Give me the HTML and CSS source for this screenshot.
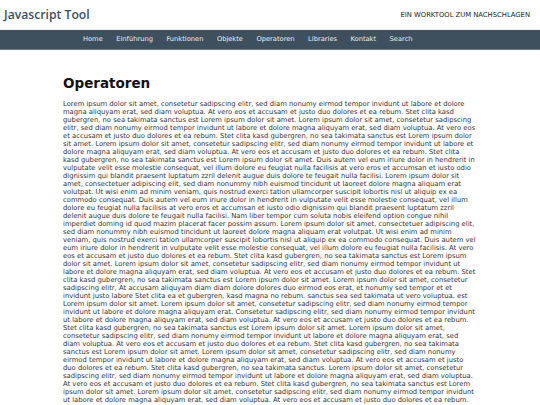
FILE: index.html
```html
<!DOCTYPE html>
<html lang="de">
<head>
<meta charset="utf-8">
<title>Javascript Tool – Operatoren</title>
<link rel="stylesheet" href="styles.css">
</head>
<body>
<header class="site-header">
  <div class="logo">Javascript Tool</div>
  <div class="tagline">EIN WORKTOOL ZUM NACHSCHLAGEN</div>
</header>
<nav class="main-nav">
  <div class="wrap">
    <ul class="menu">
      <li><a href="#">Home</a></li>
      <li><a href="#">Einführung</a></li>
      <li><a href="#">Funktionen</a></li>
      <li><a href="#">Objekte</a></li>
      <li><a href="#">Operatoren</a></li>
      <li><a href="#">Libraries</a></li>
      <li><a href="#">Kontakt</a></li>
      <li><a href="#">Search</a></li>
    </ul>
  </div>
</nav>
<main class="wrap content">
  <h1 class="title">Operatoren</h1>
  <p class="text">Lorem ipsum dolor sit amet, consetetur sadipscing elitr, sed diam nonumy eirmod tempor invidunt ut labore et dolore magna aliquyam erat, sed diam voluptua. At vero eos et accusam et justo duo dolores et ea rebum. Stet clita kasd gubergren, no sea takimata sanctus est Lorem ipsum dolor sit amet. Lorem ipsum dolor sit amet, consetetur sadipscing elitr, sed diam nonumy eirmod tempor invidunt ut labore et dolore magna aliquyam erat, sed diam voluptua. At vero eos et accusam et justo duo dolores et ea rebum. Stet clita kasd gubergren, no sea takimata sanctus est Lorem ipsum dolor sit amet. Lorem ipsum dolor sit amet, consetetur sadipscing elitr, sed diam nonumy eirmod tempor invidunt ut labore et dolore magna aliquyam erat, sed diam voluptua. At vero eos et accusam et justo duo dolores et ea rebum. Stet clita kasd gubergren, no sea takimata sanctus est Lorem ipsum dolor sit amet. Duis autem vel eum iriure dolor in hendrerit in vulputate velit esse molestie consequat, vel illum dolore eu feugiat nulla facilisis at vero eros et accumsan et iusto odio dignissim qui blandit praesent luptatum zzril delenit augue duis dolore te feugait nulla facilisi. Lorem ipsum dolor sit amet, consectetuer adipiscing elit, sed diam nonummy nibh euismod tincidunt ut laoreet dolore magna aliquam erat volutpat. Ut wisi enim ad minim veniam, quis nostrud exerci tation ullamcorper suscipit lobortis nisl ut aliquip ex ea commodo consequat. Duis autem vel eum iriure dolor in hendrerit in vulputate velit esse molestie consequat, vel illum dolore eu feugiat nulla facilisis at vero eros et accumsan et iusto odio dignissim qui blandit praesent luptatum zzril delenit augue duis dolore te feugait nulla facilisi. Nam liber tempor cum soluta nobis eleifend option congue nihil imperdiet doming id quod mazim placerat facer possim assum. Lorem ipsum dolor sit amet, consectetuer adipiscing elit, sed diam nonummy nibh euismod tincidunt ut laoreet dolore magna aliquam erat volutpat. Ut wisi enim ad minim veniam, quis nostrud exerci tation ullamcorper suscipit lobortis nisl ut aliquip ex ea commodo consequat. Duis autem vel eum iriure dolor in hendrerit in vulputate velit esse molestie consequat, vel illum dolore eu feugiat nulla facilisis. At vero eos et accusam et justo duo dolores et ea rebum. Stet clita kasd gubergren, no sea takimata sanctus est Lorem ipsum dolor sit amet. Lorem ipsum dolor sit amet, consetetur sadipscing elitr, sed diam nonumy eirmod tempor invidunt ut labore et dolore magna aliquyam erat, sed diam voluptua. At vero eos et accusam et justo duo dolores et ea rebum. Stet clita kasd gubergren, no sea takimata sanctus est Lorem ipsum dolor sit amet. Lorem ipsum dolor sit amet, consetetur sadipscing elitr, At accusam aliquyam diam diam dolore dolores duo eirmod eos erat, et nonumy sed tempor et et invidunt justo labore Stet clita ea et gubergren, kasd magna no rebum. sanctus sea sed takimata ut vero voluptua. est Lorem ipsum dolor sit amet. Lorem ipsum dolor sit amet, consetetur sadipscing elitr, sed diam nonumy eirmod tempor invidunt ut labore et dolore magna aliquyam erat. Consetetur sadipscing elitr, sed diam nonumy eirmod tempor invidunt ut labore et dolore magna aliquyam erat, sed diam voluptua. At vero eos et accusam et justo duo dolores et ea rebum. Stet clita kasd gubergren, no sea takimata sanctus est Lorem ipsum dolor sit amet. Lorem ipsum dolor sit amet, consetetur sadipscing elitr, sed diam nonumy eirmod tempor invidunt ut labore et dolore magna aliquyam erat, sed diam voluptua. At vero eos et accusam et justo duo dolores et ea rebum. Stet clita kasd gubergren, no sea takimata sanctus est Lorem ipsum dolor sit amet. Lorem ipsum dolor sit amet, consetetur sadipscing elitr, sed diam nonumy eirmod tempor invidunt ut labore et dolore magna aliquyam erat, sed diam voluptua. At vero eos et accusam et justo duo dolores et ea rebum. Stet clita kasd gubergren, no sea takimata sanctus. Lorem ipsum dolor sit amet, consetetur sadipscing elitr, sed diam nonumy eirmod tempor invidunt ut labore et dolore magna aliquyam erat, sed diam voluptua. At vero eos et accusam et justo duo dolores et ea rebum. Stet clita kasd gubergren, no sea takimata sanctus est Lorem ipsum dolor sit amet. Lorem ipsum dolor sit amet, consetetur sadipscing elitr, sed diam nonumy eirmod tempor invidunt ut labore et dolore magna aliquyam erat, sed diam voluptua. At vero eos et accusam et justo duo dolores et ea rebum.</p>
</main>
</body>
</html>
```

FILE: styles.css
```css
html, body {
  margin: 0;
  padding: 0;
  background: #ffffff;
}

body {
  font-family: "DejaVu Sans", Verdana, sans-serif;
  color: #333333;
}

.site-header {
  display: flex;
  justify-content: space-between;
  align-items: baseline;
  padding: 0 10px 0 4px;
  border-bottom: 1px solid #eef0f2;
  box-sizing: border-box;
  height: 30px;
}

.logo {
  font-family: "Open Sans", sans-serif;
  font-weight: 600;
  font-size: 12.2px;
  line-height: 30px;
  color: #3f505d;
}

.tagline {
  font-size: 6.8px;
  color: #222222;
  line-height: 30px;
  position: relative;
  top: -2px;
}

.main-nav {
  background: #3e505d;
  height: 19px;
  border-bottom: 1px solid #6e7d88;
}

.wrap {
  width: 414px;
  margin: 0 auto;
}

.menu {
  display: flex;
  gap: 13.5px;
  list-style: none;
  margin: 0;
  padding: 0 0 0 20px;
}

.menu a {
  display: block;
  color: #e9edf0;
  text-decoration: none;
  font-size: 6.7px;
  line-height: 19px;
}

.title {
  margin: 25px 0 0;
  font-size: 13.5px;
  line-height: 16px;
  font-weight: bold;
  color: #111111;
}

.text {
  margin: 8.5px 0 0;
  font-size: 6.8px;
  line-height: 8px;
  color: #333333;
}
```
